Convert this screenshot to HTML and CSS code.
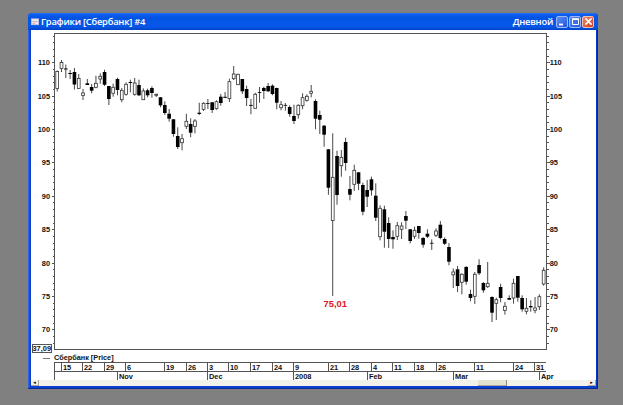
FILE: index.html
```html
<!DOCTYPE html>
<html lang="ru">
<head>
    <meta charset="UTF-8">
    <meta name="viewport" content="width=device-width, initial-scale=1.0">
    <title>Графики [Сбербанк] #4</title>
    <link rel="stylesheet" href="styles.css">
</head>
<body>
    <div class="window">
        <div class="title-bar">
            <svg class="window-icon" width="8" height="8" viewBox="0 0 9 8">
                <rect x="0.5" y="0.5" width="8" height="6.5" fill="#f3eef0" stroke="#c9c4e0"/>
                <path d="M1.5 3.5H7.5M1.5 5.5H5" stroke="#c58f9b" stroke-width="0.8"/>
            </svg>
            <span class="title">Графики [Сбербанк] #4</span>
            <span class="title period">Дневной</span>
            <div class="buttons">
                <button class="btn"><svg width="11" height="11" viewBox="0 0 11 11"><path d="M2 8.5H6" stroke="#fff" stroke-width="1.8"/></svg></button>
                <button class="btn"><svg width="11" height="11" viewBox="0 0 11 11"><path d="M2.5 3.5H8.5V8.5H2.5ZM2 2.7H9" fill="none" stroke="#fff"/></svg></button>
                <button class="btn close-btn"><svg width="11" height="11" viewBox="0 0 11 11"><path d="M2.4 2.4L8.6 8.6M8.6 2.4L2.4 8.6" stroke="#fff" stroke-width="1.6"/></svg></button>
            </div>
        </div>
        <div class="content">
            <svg class="chart" id="chart" width="565" height="324" viewBox="31 30 565 324"></svg>
            <div class="legend"><span class="legend-line"></span>Сбербанк [Price]</div>
            <svg class="dates" id="dates" width="565" height="18" viewBox="31 362 565 18"></svg>
            <div class="scrollbar">
                <span class="arrow">◂</span>
                <span class="thumb"></span>
                <span class="arrow">▸</span>
            </div>
        </div>
    </div>
    <script src="chart.js"></script>
</body>
</html>
```
FILE: styles.css
```css
body {
    margin: 0;
    padding: 13px 0 0 28px;
    height: 405px;
    box-sizing: border-box;
    background-color: #808080;
    font-family: "Liberation Sans", Arial, sans-serif;
    overflow: hidden;
}

.window {
    width: 570px;
    height: 376px;
    box-sizing: border-box;
    padding: 0 3px 3px 3px;
    border-radius: 4px 4px 0 0;
    background: linear-gradient(to right, #3a6fe8 0, #0c3fd0 2px, #0c3fd0 568px, #001c9c 570px);
    box-shadow: inset 0 -1px 0 #0a2a9a;
}

.title-bar {
    display: flex;
    align-items: center;
    height: 17px;
    margin: 0 -3px;
    padding: 0 4px 0 3px;
    border-radius: 4px 4px 0 0;
    background: linear-gradient(#2a6ff0 0, #0b5cf0 2px, #0353e2 5px, #0558ea 11px, #0656e6 14px, #0142c4 17px);
    color: #fff;
    white-space: nowrap;
}

.window-icon {
    margin-right: 2px;
}

.title {
    font-family: "Open Sans", "Noto Sans", sans-serif;
    font-size: 9.4px;
    font-weight: 600;
    letter-spacing: -0.25px;
}

.period {
    margin-left: auto;
    margin-right: 3px;
}

.buttons {
    display: flex;
    gap: 1px;
}

.btn {
    display: flex;
    width: 12px;
    height: 12px;
    padding: 0;
    box-sizing: border-box;
    border: 1px solid #9db8f4;
    border-radius: 2px;
    background: linear-gradient(135deg, #5c8cf4, #2259dc);
    align-items: center;
    justify-content: center;
}

.btn svg {
    flex: none;
}

.close-btn {
    border-color: #eec0b4;
    background: linear-gradient(135deg, #ec8a6c, #d2401c);
}

.content {
    display: flex;
    flex-direction: column;
    width: 565px;
    height: 356px;
    background-color: #fff;
}

.chart, .dates {
    display: block;
    flex: none;
}

.legend {
    display: flex;
    align-items: center;
    height: 8px;
    line-height: 8px;
    font-size: 7.3px;
    font-weight: bold;
    color: #111;
    white-space: nowrap;
}

.legend-line {
    width: 7px;
    height: 1px;
    margin: 0 4px 0 12px;
    background-color: #777;
}

.scrollbar {
    display: flex;
    justify-content: space-between;
    height: 6px;
    background-color: #f3f2ea;
}

.arrow {
    width: 8px;
    background-color: #f3f2ea;
    border-right: 1px solid #aca899;
    border-bottom: 1px solid #aca899;
    box-sizing: border-box;
    font-family: "DejaVu Sans", sans-serif;
    font-size: 5px;
    line-height: 5px;
    text-align: center;
}

.thumb {
    width: 29px;
    margin-left: 431px;
    margin-right: 73px;
    box-sizing: border-box;
    background-color: #e6e2d0;
    border-right: 1px solid #8f8b7c;
    border-bottom: 1px solid #aca899;
}

.axis {
    stroke: #555;
    stroke-width: 1;
    fill: none;
    shape-rendering: crispEdges;
}

.price, .date {
    font-size: 7.4px;
    font-weight: bold;
    fill: #111;
}

.end {
    text-anchor: end;
}

.wick {
    stroke: #333;
    stroke-width: 0.9;
}

.down {
    fill: #000;
}

.up {
    fill: #fff;
    stroke: #333;
    stroke-width: 0.8;
}

.low-mark {
    font-size: 9.4px;
    font-weight: bold;
    fill: #e0141c;
    text-anchor: middle;
}
```
FILE: chart.js
```js
// high, body top, body bottom, low, 1 = closed down
const candles = [
    [70.5,71.5,88.5,91.5,0],[60,62.5,68.5,72,0],[64.5,68.5,69.5,78,1],[70,73,74,79,1],
    [68,72,84.5,89.5,1],[74,78.5,88.5,89,0],[89,93,95.5,100,0],[79,83.3,85,85,1],
    [84,87,90.7,93.3,1],[75.7,83.3,87.3,88.3,0],[73.3,76.3,79,83.7,0],[69.7,72,84.7,86,1],
    [86,86,99,105,1],[83.7,87.3,93.3,96.7,0],[77.7,79,90,95.3,1],[88,90.3,99.7,102.3,0],
    [82.3,84.3,94.3,95.7,0],[79.7,82,83,92.3,1],[78,83,94.3,95.7,0],[79.7,85,95.3,96,1],
    [88.3,91,99.7,99.7,0],[88.7,90.3,95.3,97.3,1],[86.3,88,93,97.7,1],[93.7,94.3,95.3,97,0],
    [97,97.3,105.3,107.3,1],[101.3,105,113,115,1],[109,113.7,118.7,121.7,1],[119,119.3,134,136.7,1],
    [127.3,136,147,149,1],[134,138.7,142.7,150.3,0],[113.7,121.3,126.3,129,0],[118.3,124,132.7,137.3,1],
    [119,121,126.3,133.3,0],[102.7,112.7,113.9,115,1],[102.3,103.3,109.3,111,0],[99,103,103.8,109,1],
    [102,102.3,110,113,1],[100.3,101.7,108.7,109.7,0],[94,96.7,103,105.7,1],[92,96.8,97.8,98,1],
    [78.7,81.7,98.7,102,0],[66,74,78.7,80,0],[73.7,74.3,84.7,84.7,0],[79,79,91.3,94,1],
    [85.7,89,98,106,1],[99,104.9,105.8,114.3,1],[92.7,94.3,108.3,108.3,0],[87,92,92.8,102.7,1],
    [86.7,88,91,99,1],[83,86,91.3,92,1],[84.3,85.7,94,95.3,1],[87.7,88,102.7,109.3,1],
    [101,104.7,107.7,110.3,0],[103,104.9,105.7,110.7,1],[105.3,107,114,116.7,1],[104.7,116,121,124,1],
    [104.3,105.3,114.7,118.7,0],[93.3,97.7,105.7,109.3,0],[94.3,96.3,100.3,101.7,0],[85,91.3,93.3,97.3,0],
    [99.3,101,118.7,129.3,1],[110.7,115,119.7,134,1],[125,125.7,134.7,146.7,1],[149,149.3,187.7,194.7,1],
    [133.3,177.3,220.5,296,0],[150.7,156,195,204.7,1],[150,157.3,165.7,176.7,0],[137.7,142,163,170.7,1],
    [176,189,194.7,200.3,1],[164.7,170.3,184.3,191,0],[172,172.3,183.7,190,1],[182.7,185,211.7,215.3,1],
    [180,190,196.7,207,1],[176.7,179.3,190.3,195.7,1],[183.3,195.7,217.7,221,1],[205.3,208.3,236.7,240.3,0],
    [205.7,209.3,231.7,247.7,1],[217.3,223,239,248,1],[230.3,237,239.3,248.7,1],[222,225.7,236.3,240,0],
    [222.3,226,229.3,239,0],[211,216,220.7,229,1],[229,229.3,241,243.3,1],[226.7,230.3,236.3,239,0],
    [226,226,233,238.7,1],[237,238,244.7,247.7,1],[229.3,233.7,236.7,238,1],[239.3,242.8,243.6,250,1],
    [228.3,231,235.3,237,0],[221,224.7,238,239.3,1],[237.3,239,243.7,245,1],[243,247,261.7,265.3,1],
    [268.5,272,274.8,288,0],[266,269.3,286,292,1],[273.3,274.3,282.3,294.3,0],[266,267,281.7,284.7,1],
    [289.7,294,298,301.3,1],[272,274.3,296.3,304,0],[259.3,265,273.3,275,1],[282,283,290.3,292.7,1],
    [262,283.3,286.7,288,0],[296.3,297,312.7,322,1],[297.7,299.7,303.3,320,0],[283.7,287,298,302.3,1],
    [302,306.3,310.3,314.7,0],[295.3,298,299.7,300,1],[278.7,283.3,298,303.7,0],[276,276,297.7,301.7,1],
    [295.3,298,309.3,311.7,1],[298,308.3,311.3,314.3,0],[300.3,306,307.3,311.7,1],[297,308,310.3,313.3,0],
    [294.3,296.7,306.7,310,0],[267.3,270.3,284,285.7,0]
];

const days = [
    [61, '15'], [82, '22'], [104, '29'], [125, '6'], [164, '19'], [186, '26'], [207, '3'],
    [228, '10'], [250, '17'], [272, '24'], [293, '9'], [328, '21'], [349, '28'], [371, '4'],
    [392, '11'], [414, '18'], [436, '26'], [474, '11'], [513, '24'], [534, '31']
];

const months = [[117, 'Nov'], [207, 'Dec'], [293, '2008'], [367, 'Feb'], [453, 'Mar'], [539, 'Apr']];

const LEFT = 54.5;
const RIGHT = 546.5;

function priceY(price) {
    return 62.8 + (110 - price) * 6.675;
}

function drawChart() {
    let out = `<rect class="axis" x="${LEFT}" y="33.5" width="${RIGHT - LEFT}" height="315.5"/>`;

    for (let p = 68; p <= 114; p++) {
        const y = Math.floor(priceY(p)) + 0.5;
        const len = p % 5 === 0 ? 3 : 2;
        out += `<path class="axis" d="M${LEFT - len} ${y}H${LEFT}M${RIGHT} ${y}H${RIGHT + len}"/>`;
        if (p % 5 === 0) {
            out += `<text class="price end" x="50" y="${y + 2.6}">${p}</text>`;
            out += `<text class="price" x="549.7" y="${y + 2.6}">${p}</text>`;
        }
    }

    candles.forEach(([high, top, bottom, low, down], i) => {
        const x = 57.2 + i * 4.305;
        out += `<line class="wick" x1="${x}" x2="${x}" y1="${high}" y2="${low}"/>`;
        if (down) {
            out += `<rect class="down" x="${x - 1.8}" y="${top}" width="3.6" height="${bottom - top}"/>`;
        } else {
            out += `<rect class="up" x="${x - 1.4}" y="${top}" width="2.8" height="${bottom - top}"/>`;
        }
    });

    out += `<text class="low-mark" x="335.3" y="306.7">75,01</text>`;
    out += `<rect class="axis" x="32.5" y="344.5" width="19" height="8"/>`;
    out += `<text class="price end" x="51" y="351.3">37,09</text>`;
    document.querySelector('#chart').innerHTML = out;
}

function drawDates() {
    let out = `<path class="axis" d="M${LEFT} 380V362.5H546M${LEFT} 371.5H546"/>`;
    days.forEach(([x, label]) => {
        out += `<path class="axis" d="M${x + 0.5} 362V371"/><text class="date" x="${x + 2}" y="369.6">${label}</text>`;
    });
    months.forEach(([x, label]) => {
        out += `<path class="axis" d="M${x + 0.5} 371V380"/><text class="date" x="${x + 2}" y="378.6">${label}</text>`;
    });
    document.querySelector('#dates').innerHTML = out;
}

drawChart();
drawDates();
```
